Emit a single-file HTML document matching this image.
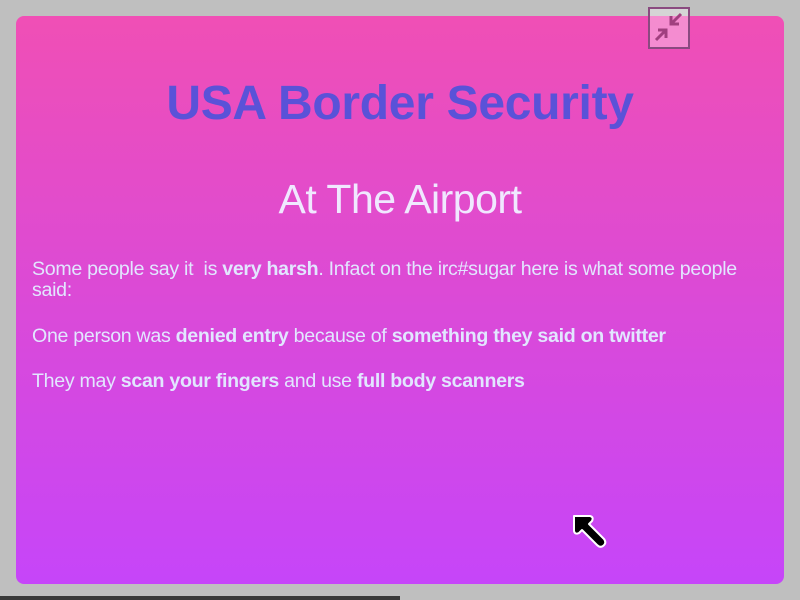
<!DOCTYPE html>
<html><head><style>
body{margin:0;width:800px;height:600px;background:#bfbfbf;position:relative;overflow:hidden;font-family:"Liberation Sans",sans-serif}
.card{position:absolute;left:16px;top:16px;width:768px;height:568px;border-radius:8px;background:linear-gradient(#f04fb5,#c645f9)}
h1{position:absolute;left:0;width:768px;top:60px;margin:0;text-align:center;font-size:48px;font-weight:bold;color:#5a52d8;letter-spacing:-0.3px}
h2{position:absolute;left:0;width:768px;top:160px;margin:0;text-align:center;font-size:41px;font-weight:normal;color:#f0e8ff;letter-spacing:-0.5px}
.t{position:absolute;left:16px;width:736px;color:#e2e6ff;font-size:19.6px;line-height:21px;letter-spacing:-0.3px}
b{font-weight:bold}
.bar{position:absolute;left:0;top:596px;width:400px;height:4px;background:#3a3a3a}
.ic{position:absolute;left:648px;top:7px;width:38px;height:38px;border:2px solid #8a4a80;background:rgba(255,255,255,0.35);box-sizing:content-box}
</style></head><body>
<div class="card">
<h1>USA Border Security</h1>
<h2>At The Airport</h2>
<div class="t" style="top:243px">Some people say it&nbsp; is <b>very harsh</b>. Infact on the irc#sugar here is what some people said:</div>
<div class="t" style="top:310px">One person was <b>denied entry</b> because of <b>something they said on twitter</b></div>
<div class="t" style="top:355px">They may <b>scan your fingers</b> and use <b>full body scanners</b></div>
</div>
<div class="ic"><svg width="38" height="38" viewBox="0 0 38 38"><g stroke="#a0407f" stroke-width="3" fill="none"><path d="M31 5L22 14M21 7V15H29"/><path d="M6 31L15 22M8 21H16V29"/></g></svg></div>
<svg style="position:absolute;left:570px;top:512px" width="40" height="40" viewBox="0 0 40 40"><path d="M4 4H20Q24 5 22 9L19 12L34 27Q37 31 33 34Q30 36 27 33L12 18L9 21Q5 23 4 19Z" fill="#000" stroke="#fff" stroke-width="2" stroke-linejoin="round"/></svg>
<div class="bar"></div>
</body></html>
